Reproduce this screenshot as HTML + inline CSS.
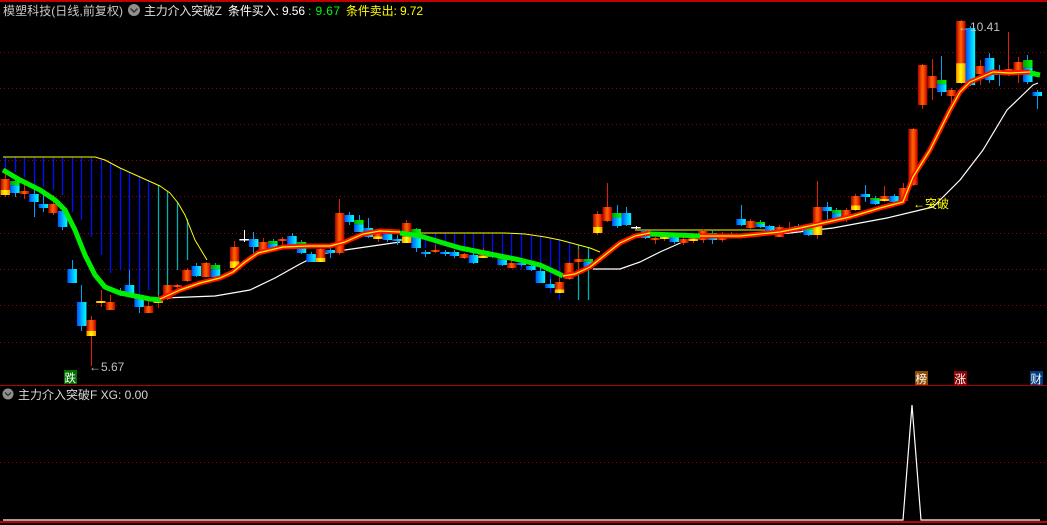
<!DOCTYPE html>
<html><head><meta charset="utf-8"><style>
html,body{margin:0;padding:0;background:#000;width:1047px;height:525px;overflow:hidden}
svg{position:absolute;left:0;top:0}
text{font-family:"Liberation Sans","Noto Sans CJK SC",sans-serif}
</style></head><body>
<svg id="s" width="1047" height="525" xmlns="http://www.w3.org/2000/svg">
<defs>
<linearGradient id="gr" x1="0" x2="1" y1="0" y2="0"><stop offset="0" stop-color="#a80000"/><stop offset=".45" stop-color="#ff6000"/><stop offset=".6" stop-color="#ff5000"/><stop offset="1" stop-color="#b00000"/></linearGradient>
<linearGradient id="gy" x1="0" x2="1" y1="0" y2="0"><stop offset="0" stop-color="#ff9000"/><stop offset=".5" stop-color="#ffff00"/><stop offset="1" stop-color="#ff9000"/></linearGradient>
<linearGradient id="gc" x1="0" x2="1" y1="0" y2="0"><stop offset="0" stop-color="#0050ff"/><stop offset=".6" stop-color="#00c0ff"/><stop offset="1" stop-color="#00ffff"/></linearGradient>
<linearGradient id="gg" x1="0" x2="1" y1="0" y2="0"><stop offset="0" stop-color="#00a000"/><stop offset="1" stop-color="#00ff00"/></linearGradient>
</defs>
<rect x="0" y="0" width="1047" height="2" fill="#c00000"/>
<g id="grid" stroke="#a00000" stroke-width="1" stroke-dasharray="1 3"></g>
<g id="bars"></g>
<g id="lines"></g>
<g id="candles"></g>
<g id="thick"></g>
<line x1="0" y1="385.5" x2="1047" y2="385.5" stroke="#b00000"/>
<line x1="0" y1="462.5" x2="1047" y2="462.5" stroke="#a00000" stroke-dasharray="1 3"/>
<polyline points="3,520 903,520 912,405 921,520 1040,520" fill="none" stroke="#fff" stroke-width="1.2"/>
<rect x="0" y="521" width="1047" height="2" fill="#c00000"/>
<text x="3" y="15" font-size="12" fill="#c8c8c8" textLength="120">模塑科技(日线,前复权)</text>
<circle cx="134" cy="10" r="6" fill="#909090"/><path d="M130.5 8.5 L134 12 L137.5 8.5" stroke="#333" stroke-width="1.5" fill="none"/>
<text x="144" y="15" font-size="12" fill="#e0e0e0" textLength="78">主力介入突破Z</text>
<text x="228" y="15" font-size="12" fill="#fff" textLength="77">条件买入: 9.56</text>
<text x="308" y="15" font-size="12" fill="#00ff00" textLength="32">: 9.67</text>
<text x="346" y="15" font-size="12" fill="#ffff00" textLength="77">条件卖出: 9.72</text>
<circle cx="8" cy="394" r="5.5" fill="#909090"/><path d="M5 392.5 L8 395.5 L11 392.5" stroke="#333" stroke-width="1.3" fill="none"/>
<text x="18" y="399" font-size="12" fill="#d8d8d8">主力介入突破F  XG: 0.00</text>
<text x="89" y="371" font-size="12" fill="#c0c0c0">←5.67</text>
<text x="958" y="31" font-size="12" fill="#c0c0c0">←10.41</text>
<text x="913" y="208" font-size="12" fill="#ffff00">←突破</text>
<rect x="64" y="370" width="13" height="14" fill="#007000"/><text x="64.5" y="382" font-size="11.5" fill="#fff">跌</text>
<rect x="915" y="371" width="13" height="14" fill="#8b4a00"/><text x="915.5" y="383" font-size="11.5" fill="#fff">榜</text>
<rect x="954" y="371" width="13" height="14" fill="#8b0000"/><text x="954.5" y="383" font-size="11.5" fill="#fff">涨</text>
<rect x="1030" y="371" width="13" height="14" fill="#003a80"/><text x="1030.5" y="383" font-size="11.5" fill="#fff">财</text>
</svg>
<script>
var NS="http://www.w3.org/2000/svg";
function el(p,t,a){var e=document.createElementNS(NS,t);for(var k in a)e.setAttribute(k,a[k]);document.getElementById(p).appendChild(e);return e;}
[52,88,124,160,196,233,269,305,342].forEach(function(y){el("grid","line",{x1:0,x2:1047,y1:y+.5,y2:y+.5});});
var D=[
["ry",179,195,169,197],["gc",181,193,177,197],["r",191,194,185,199],["c",194,202,187,217],["c",204,208,195,212],["r",204,213,195,215],["c",211,227,207,230],["c",269,283,260,283],["c",302,326,285,331],["ry",320,336,316,366],
["ry",301,303,290,307],["r",302,310,295,310],["c",291,293,288,296],["c",285,294,270,297],["gc",295,307,295,313],["r",306,313,299,313],["ry",298,303,295,308],["r",285,299,285,300],["r",285,287,284,289],["r",270,281,268,282],
["c",266,276,263,277],["r",263,277,262,277],["gc",265,277,263,277],["r",275,277,273,278],["ry",247,268,241,270],["w",239,240,230,242],["c",239,247,232,255],["r",242,253,238,254],["gc",241,249,239,250],["r",239,241,237,247],
["c",236,246,233,247],["gc",242,253,240,254],["c",254,262,252,262],["ry",249,262,245,262],["c",250,253,247,258],["r",213,253,199,255],["c",215,222,212,225],["gc",220,232,215,232],["c",228,237,218,238],["ry",231,239,229,242],
["gc",231,240,230,242],["c",239,241,235,245],["ry",223,243,220,243],["gc",229,248,228,252],["c",252,253,250,257],["r",250,252,245,253],["c",252,253,250,256],["c",252,256,250,258],["r",254,258,253,259],["c",255,263,253,264],
["ry",252,258,248,258],["gc",255,257,253,258],["gc",257,265,255,266],["r",263,268,261,268],["c",263,265,262,266],["c",266,270,264,271],["c",271,283,268,283],["c",284,288,279,288],["ry",282,293,277,293],["r",263,279,262,280],
["r",259,262,249,270],["gc",259,267,252,270],["ry",214,233,211,235],["r",207,221,183,222],["gc",213,226,205,228],["c",213,225,207,226],["w",227,228,226,229],["c",231,238,229,239],["r",238,240,237,244],["ry",235,239,233,241],
["gc",235,242,233,244],["r",239,243,237,245],["ry",238,241,236,243],["r",231,240,229,243],["gc",233,240,230,244],["r",234,240,232,242],["r",234,236,232,238],["c",219,225,205,226],["r",221,228,219,229],["gc",222,227,220,228],
["c",226,234,225,235],["r",227,237,225,237],["r",228,232,222,233],["c",226,229,224,230],["gc",228,235,226,236],["ry",207,235,181,239],["c",207,211,202,220],["gc",210,219,208,220],["r",210,219,208,222],["ry",196,210,194,211],
["c",194,197,185,202],["gc",198,204,196,205],["ry",196,201,186,202],["c",196,202,194,203],["r",188,201,183,202],["r",129,185,128,186],["r",65,105,64,109],["r",76,88,59,100],["gc",80,92,56,96],["r",90,96,88,109],
["ry",21,83,20,84],["c",28,85,26,86],["r",66,74,60,85],["c",58,80,53,83],["c",73,75,65,86],["r",69,75,32,76],["r",62,72,57,83],["gc",60,82,55,84],["c",92,96,90,109]];
function X(i){return 5+9.556*i;}
var Y1=[[3,157],[95,157],[105,160],[120,168],[140,177],[160,186],[170,193],[178,203],[185,215],[195,240],[207,260]];
var Y2=[[420,233],[505,233],[525,234],[545,237],[560,240],[575,244],[590,248],[600,252]];
function interp(P,x){if(x<=P[0][0])return P[0][1];for(var k=1;k<P.length;k++){if(x<=P[k][0]){var a=P[k-1],b=P[k];return a[1]+(b[1]-a[1])*(x-a[0])/(b[0]-a[0]);}}return P[P.length-1][1];}
var B1=[172,172,177,185,187,190,195,212,220,237,255,273,270,278,297,290,300,287,270,260];
B1.forEach(function(b,i){var x=Math.round(X(i))+.5;el("bars","line",{x1:x,x2:x,y1:interp(Y1,X(i)),y2:b,stroke:i<16?"#0010ff":"#00b0b0","stroke-width":1.3});});
var B2={44:248,45:250,46:243,47:245,48:250,49:255,50:250,51:252,52:260,53:262,54:270,55:270,56:280,57:293,58:300,59:280,60:300,61:300};
for(var k in B2){var i=+k,x=Math.round(X(i))+.5;el("bars","line",{x1:x,x2:x,y1:interp(Y2,X(i)),y2:B2[k],stroke:i<60?"#0010ff":"#00b0b0","stroke-width":1.3});}
function pl(g,pts,c,w){el(g,"polyline",{points:pts.map(function(p){return p.join(",")}).join(" "),fill:"none",stroke:c,"stroke-width":w,"stroke-linejoin":"round"});}
pl("lines",Y1,"#ffff00",1);pl("lines",Y2,"#ffff00",1);
pl("lines",[[635,230],[820,230]],"#ffff00",1);pl("lines",[[1000,72],[1035,72]],"#ffff00",1.5);
pl("lines",[[163,298],[215,296],[250,290],[275,278],[300,264],[320,254],[345,250],[400,242]],"#fff",1.2);
pl("lines",[[593,269],[620,269],[640,262],[660,252],[687,240],[700,237],[743,236],[790,233],[833,228],[887,218],[933,207],[960,180],[983,150],[1007,110],[1033,85],[1038,83]],"#fff",1.2);
D.forEach(function(d,i){var x=X(i),t=d[0],top=d[1],bot=d[2],wt=d[3],wb=d[4];
 var wc=(t=="r"||t=="ry")?"#e02000":(t=="w"?"#fff":"#00a0ff");
 var cx=Math.round(x)+.5;el("candles","line",{x1:cx,x2:cx,y1:wt,y2:wb,stroke:wc,"stroke-width":1});
 var h=Math.max(bot-top,2),bx=x-4.5,w=9.5;
 if(t=="w"){el("candles","rect",{x:bx,y:top,width:w,height:1.5,fill:"#fff"});return;}
 if(t=="r")el("candles","rect",{x:bx,y:top,width:w,height:h,fill:"url(#gr)"});
 if(t=="ry"){var yh=Math.max(h*0.32,2);el("candles","rect",{x:bx,y:top,width:w,height:h-yh,fill:"url(#gr)"});el("candles","rect",{x:bx,y:top+h-yh,width:w,height:yh,fill:"url(#gy)"});}
 if(t=="c")el("candles","rect",{x:bx,y:top,width:w,height:h,fill:"url(#gc)"});
 if(t=="gc"){var gh=Math.max(h*0.35,2);el("candles","rect",{x:bx,y:top,width:w,height:gh,fill:"url(#gg)"});el("candles","rect",{x:bx,y:top+gh,width:w,height:h-gh,fill:"url(#gc)"});}
});
var G1=[[3,170],[20,180],[40,190],[55,200],[65,210],[75,230],[85,255],[95,275],[105,287],[120,293],[135,296],[150,299],[162,300]];
var R1=[[160,299],[180,290],[200,283],[220,278],[233,272],[245,262],[258,253],[283,247],[310,246],[330,246],[345,242],[363,234],[380,231],[400,232]];
var G2=[[400,233],[420,236],[440,242],[460,248],[480,252],[500,256],[520,260],[540,265],[555,272],[563,276]];
var R2=[[563,276],[575,274],[590,267],[605,255],[620,243],[635,236],[650,233]];
var G3=[[650,234],[700,236]];
var R3=[[700,236],[740,236],[780,232],[800,228],[823,223],[850,217],[880,208],[903,202],[913,177],[930,150],[950,110],[960,92],[970,82],[993,72],[1010,73],[1030,72]];
var G4=[[1030,73],[1040,75]];
[G1,G2,G3,G4].forEach(function(p){pl("thick",p,"#00ee00",5);});
[R1,R2,R3].forEach(function(p){pl("thick",p,"#ff1000",5);pl("thick",p,"#ffff00",1.2);});
</script>
</body></html>
